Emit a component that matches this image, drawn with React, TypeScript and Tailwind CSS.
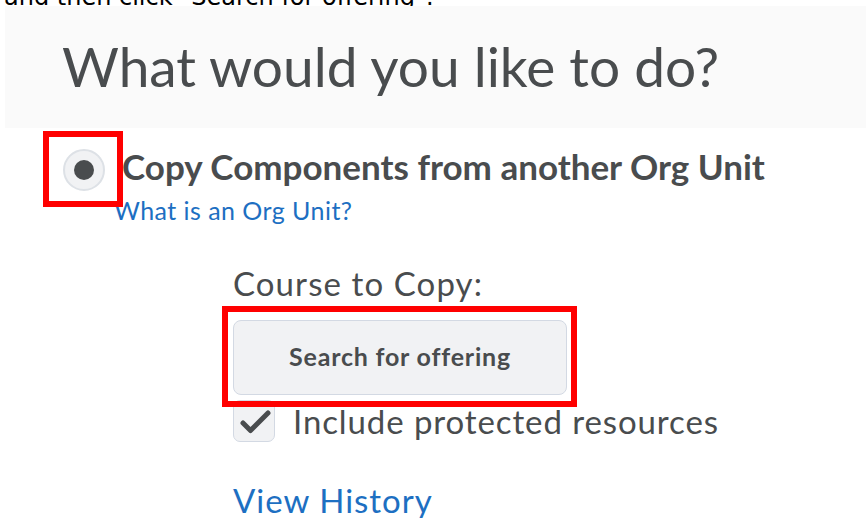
export default function App() {
  return (
    <div className="relative w-[866px] h-[518px] overflow-hidden bg-white text-[#494c4e]" style={{ fontFamily: "Lato, 'Open Sans', sans-serif" }}>
      {/* trailing line of the previous paragraph, mostly scrolled away */}
      <div className="h-[6px] overflow-hidden pl-[4px]">
        <p className="-mt-[15px] text-[24px] leading-[24px] text-black whitespace-nowrap" style={{ fontFamily: "'DejaVu Sans', sans-serif" }}>
          and then click "Search for offering".
        </p>
      </div>

      {/* page heading band */}
      <div className="ml-[5px] bg-[#fafafa] pt-[33px] pb-[34px] pl-[57px]">
        <h1 className="text-[55px] leading-[55px] font-normal whitespace-nowrap">What would you like to do?</h1>
      </div>

      <div className="pt-[20px]">
        {/* copy option */}
        <div className="flex items-start pl-[63px]">
          <div className="mt-px flex h-[42px] w-[42px] items-center justify-center rounded-full border-2 border-[#dde1e6] bg-[#f1f2f4]">
            <div className="h-[20px] w-[20px] rounded-full bg-[#494c4e]" />
          </div>
          <span className="ml-[17px] mt-px text-[35px] leading-[35px] font-bold whitespace-nowrap">
            Copy Components from another Org Unit
          </span>
        </div>
        <a className="mt-[7px] ml-[114px] block text-[25px] leading-[25px] tracking-[0.45px] text-[#1d6fc2] whitespace-nowrap">What is an Org Unit?</a>

        {/* course selection */}
        <div className="ml-[233px]">
          <div className="mt-[44px] text-[33px] leading-[33px] tracking-[1.1px] whitespace-nowrap">Course to Copy:</div>
          <button className="mt-[20px] flex h-[75px] w-[334px] items-center justify-center rounded-[8px] border border-[#d3d9e3] bg-[#f1f2f4] pb-[2px] text-[25px] leading-[25px] tracking-[0.8px] font-bold text-[#494c4e]">
            Search for offering
          </button>
          <div className="mt-[5px] flex items-start">
            <div className="h-[42px] w-[42px] rounded-[7px] border border-[#d3d9e3] bg-[#f1f2f4]">
              <svg width="42" height="42" viewBox="0 0 42 42">
                <path d="M9 22 L16.5 29.5 L34 12" fill="none" stroke="#494c4e" strokeWidth="5" strokeLinecap="round" strokeLinejoin="round" />
              </svg>
            </div>
            <span className="ml-[18px] mt-[5px] text-[33px] leading-[33px] tracking-[0.9px] whitespace-nowrap">Include protected resources</span>
          </div>
          <a className="mt-[42px] block text-[33px] leading-[33px] tracking-[1px] text-[#1d6fc2] whitespace-nowrap">View History</a>
        </div>
      </div>

      {/* highlight frames */}
      <div className="absolute left-[43px] top-[131px] h-[76px] w-[80px] border-[6px] border-[#ff0000]" />
      <div className="absolute left-[222px] top-[306px] h-[101px] w-[355px] border-[6px] border-[#ff0000]" />
    </div>
  );
}
